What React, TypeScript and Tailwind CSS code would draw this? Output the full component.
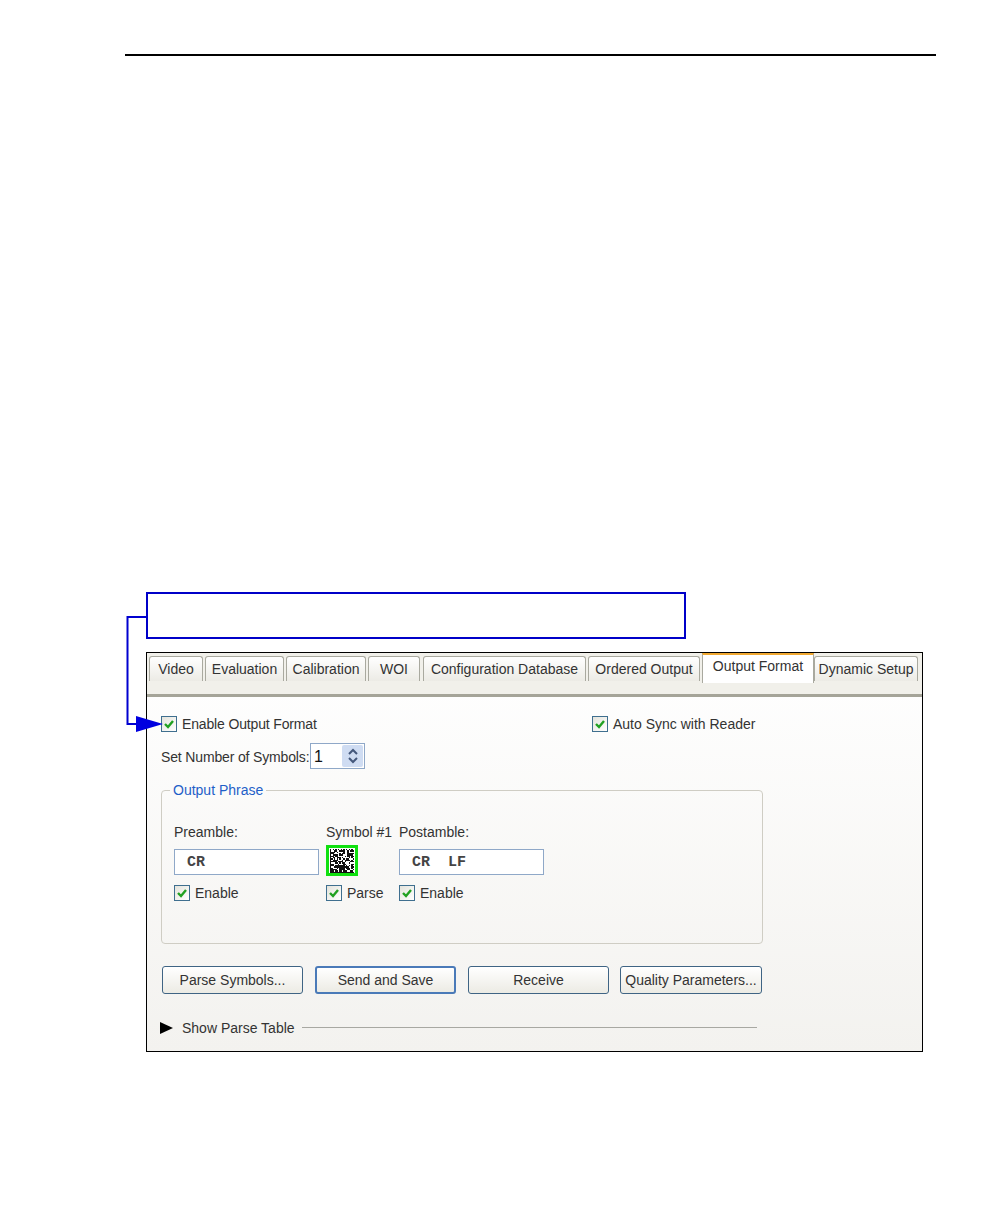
import React from "react";

const font = { fontFamily: '"Liberation Sans", Tahoma, sans-serif' };

function Check({ label, className = "", tight }: { label: string; className?: string; tight?: boolean }) {
  return (
    <div className={"flex items-center gap-[5px] h-[17px] " + className}>
      <span className="w-[16px] h-[16px] -translate-y-px shrink-0 border border-[#3f6f8f] bg-gradient-to-br from-[#e4e4dc] to-white flex items-center justify-center">
        <svg width="12" height="12" viewBox="0 0 12 12">
          <path d="M2 6l3 3 5-6" fill="none" stroke="#21a121" strokeWidth="2.4" />
        </svg>
      </span>
      <span className={"whitespace-nowrap " + (tight ? "tracking-[-0.15px]" : "")}>{label}</span>
    </div>
  );
}

function Tab({ label, w, ml }: { label: string; w: string; ml: string }) {
  return (
    <div className={`${w} ${ml} h-[25px] border border-b-0 border-[#a9a99f] rounded-t-[3px] bg-gradient-to-b from-white to-[#ecebe5] flex items-center justify-center whitespace-nowrap`}>
      {label}
    </div>
  );
}

function Btn({ label, w, ml, strong }: { label: string; w: string; ml: string; strong?: boolean }) {
  return (
    <div className={`${w} ${ml} h-[28px] rounded-[3px] border ${strong ? "border-2 border-[#4a7ab8]" : "border-[#3f6484]"} bg-gradient-to-b from-white to-[#ecebe4] flex items-center justify-center whitespace-nowrap`}>
      {label}
    </div>
  );
}

function DataMatrix() {
  const n = 18;
  const cells: React.ReactNode[] = [];
  for (let y = 0; y < n; y++) {
    for (let x = 0; x < n; x++) {
      const h = Math.sin(x * 12.9898 + y * 78.233) * 43758.5453;
      const r = h - Math.floor(h);
      const on = x === 0 || y === n - 1 || (y === 0 ? x % 2 === 0 : x === n - 1 ? y % 2 === 1 : r < 0.55);
      if (on) cells.push(<rect key={x + "-" + y} x={x} y={y} width="1" height="1" fill="#111" />);
    }
  }
  return (
    <svg width="24" height="24" viewBox="0 0 18 18" shapeRendering="crispEdges">
      {cells}
    </svg>
  );
}

export default function App() {
  return (
    <div className="relative w-[1008px] h-[1224px] bg-white overflow-hidden pt-[54px] text-[14px] leading-[17px] text-[#333]" style={font}>
      <div className="ml-[125px] w-[811px] h-[2px] bg-black" />
      <div className="ml-[146px] mt-[536px] w-[540px] h-[47px] border-2 border-[#0000c8] bg-white" />

      <div className="ml-[146px] mt-[13px] w-[777px] h-[400px] border border-black bg-gradient-to-b from-white to-[#f3f2ef] flex flex-col">
        {/* tab strip */}
        <div className="h-[44px] bg-[#f1f0ea] border-b-[3px] border-[#a5a498] shrink-0 flex items-start pt-[3px] relative">
          <Tab label="Video" w="w-[54px]" ml="ml-[2px]" />
          <Tab label="Evaluation" w="w-[79px]" ml="ml-[2px]" />
          <Tab label="Calibration" w="w-[80px]" ml="ml-[2px]" />
          <Tab label="WOI" w="w-[52px]" ml="ml-[2px]" />
          <Tab label="Configuration Database" w="w-[163px]" ml="ml-[3px]" />
          <Tab label="Ordered Output" w="w-[112px]" ml="ml-[2px]" />
          <div className="w-[112px] ml-[2px] h-[30px] -mt-[3px] bg-white border-t-2 border-[#f0a830] border-x border-x-[#a9a99f] flex items-center justify-center pb-[6px] whitespace-nowrap">
            Output Format
          </div>
          <Tab label="Dynamic Setup" w="w-[104px]" ml="ml-0" />
        </div>

        {/* body */}
        <div className="pl-[14px] pt-[19px] flex flex-col">
          <div className="flex">
            <Check label="Enable Output Format" className="w-[431px]" tight />
            <Check label="Auto Sync with Reader" />
          </div>
          <div className="flex items-center mt-[10px] h-[26px]">
            <span className="whitespace-nowrap w-[149px] tracking-[-0.15px] pt-[2px]">Set Number of Symbols:</span>
            <div className="w-[55px] h-[26px] border border-[#8fa8c8] bg-white flex items-center justify-between pl-[3px] pr-[1px] text-[#111] text-[16px]">
              <span>1</span>
              <span className="w-[21px] h-[22px] rounded-[2px] bg-[#cfdcf2] flex items-center justify-center">
                <svg width="12" height="18" viewBox="0 0 12 18">
                  <path d="M2 7l4-4 4 4M2 11l4 4 4-4" fill="none" stroke="#44587c" strokeWidth="2" />
                </svg>
              </span>
            </div>
          </div>

          {/* group box */}
          <div className="relative mt-[21px] w-[602px] h-[154px] border border-[#cfcdc4] rounded-[4px] pl-[12px] pt-[33px]">
            <span className="absolute left-[8px] -top-[9px] px-[3px] bg-[#fbfbfa] text-[#1f5fc8] whitespace-nowrap">Output Phrase</span>
            <div className="flex">
              <div className="w-[152px]">
                <div>Preamble:</div>
                <div className="mt-[8px] w-[145px] h-[26px] border border-[#8fa8c8] bg-white pl-[12px] flex items-center text-[15px] font-bold font-['Liberation_Mono',monospace] whitespace-pre text-[#444]">CR</div>
                <Check label="Enable" className="mt-[10px]" />
              </div>
              <div className="w-[73px]">
                <div className="whitespace-nowrap">Symbol #1</div>
                <div className="mt-[4px] w-[32px] h-[31px] bg-[#10e010] flex items-center justify-center">
                  <div className="w-[26px] h-[25px] bg-white flex items-center justify-center"><DataMatrix /></div>
                </div>
                <Check label="Parse" className="mt-[9px]" />
              </div>
              <div>
                <div>Postamble:</div>
                <div className="mt-[8px] w-[145px] h-[26px] border border-[#8fa8c8] bg-white pl-[12px] flex items-center text-[15px] font-bold font-['Liberation_Mono',monospace] whitespace-pre text-[#444]">CR  LF</div>
                <Check label="Enable" className="mt-[10px]" />
              </div>
            </div>
          </div>

          {/* buttons */}
          <div className="flex mt-[22px] ml-[1px]">
            <Btn label="Parse Symbols..." w="w-[141px]" ml="ml-0" />
            <Btn label="Send and Save" w="w-[141px]" ml="ml-[12px]" strong />
            <Btn label="Receive" w="w-[141px]" ml="ml-[12px]" />
            <Btn label="Quality Parameters..." w="w-[142px]" ml="ml-[11px]" />
          </div>

          {/* show parse table */}
          <div className="flex items-center mt-[25px] h-[17px] -ml-px">
            <svg width="14" height="12" viewBox="0 0 14 12" className="shrink-0"><path d="M0 0l13 6-13 6z" fill="#000" /></svg>
            <span className="ml-[8px] whitespace-nowrap w-[120px] pt-[2px]">Show Parse Table</span>
            <span className="w-[455px] h-px bg-[#a8a8a2]" />
          </div>
        </div>
      </div>

      {/* callout connector */}
      <svg className="absolute left-[120px] top-[610px]" width="50" height="125" viewBox="0 0 50 125">
        <path d="M26 7H7.5V114H20" fill="none" stroke="#0000d0" strokeWidth="2" />
        <path d="M16 106L43 114 16 122z" fill="#0000e0" />
      </svg>
    </div>
  );
}
